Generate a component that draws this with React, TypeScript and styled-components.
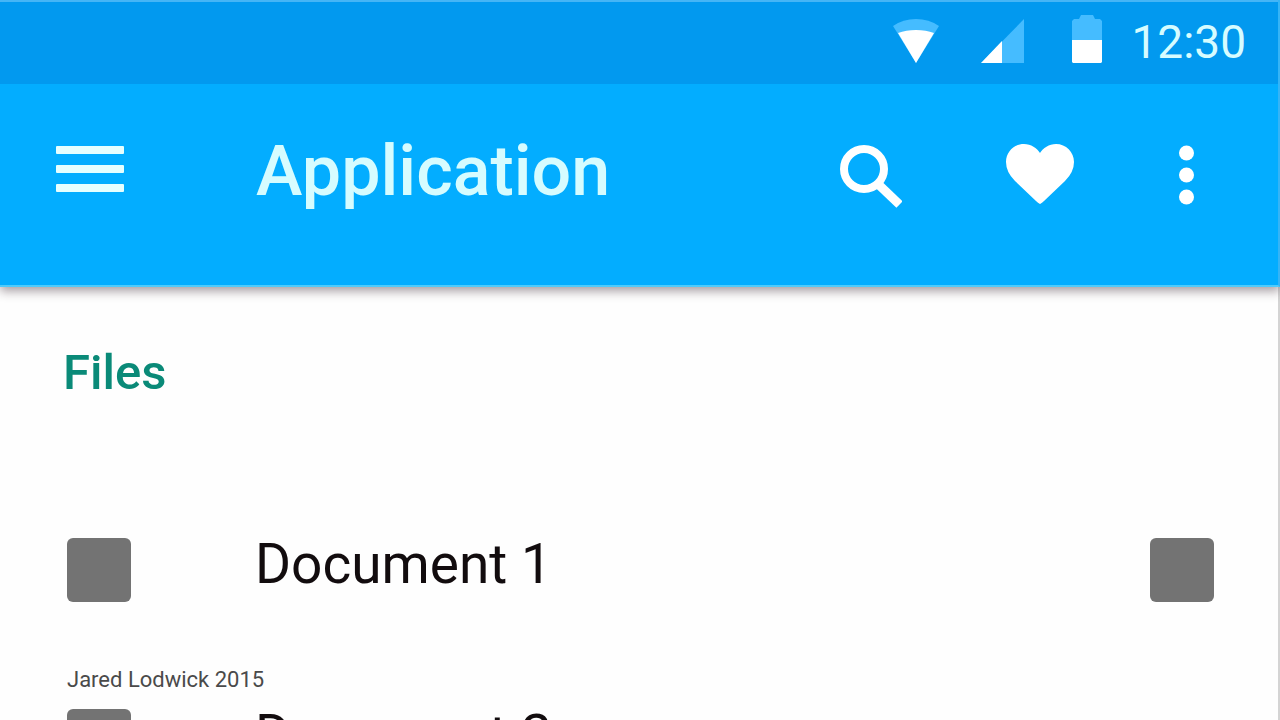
import React from "react";
import styled, { createGlobalStyle } from "styled-components";

const GlobalStyle = createGlobalStyle`
  *, *::before, *::after { box-sizing: border-box; }
  html { scrollbar-width: none; }
  body {
    margin: 0;
    background: #fefefe;
    font-family: Roboto, "Liberation Sans", sans-serif;
  }
`;

const Screen = styled.div`
  min-height: 100vh;
  display: flex;
  flex-direction: column;
  border-right: 2px solid #d4d4d4;
`;

const Header = styled.header`
  margin-right: -2px;
  border-right: 2px solid #35b4f6;
  border-bottom: 2px solid #4fcbfb;
  background: #03adff;
  box-shadow: 0 4px 10px rgba(40, 20, 30, 0.42);
`;

const StatusBar = styled.div`
  display: flex;
  align-items: flex-start;
  justify-content: flex-end;
  height: 84px;
  padding: 13px 32px 0 0;
  border-top: 2px solid #45b5f6;
  background: #0299ef;
`;

const StatusIcons = styled.div`
  display: flex;
  gap: 42px;
  margin-right: 28px;
`;

const Clock = styled.time`
  min-width: 116px;
  color: #d6fcff;
  font-size: 46px;
  line-height: 54px;
  text-align: right;
`;

const AppBar = styled.div`
  display: flex;
  align-items: flex-start;
  min-height: 201px;
  padding: 60px 83px 0 56px;
`;

const IconButton = styled.button`
  display: block;
  padding: 0;
  border: 0;
  background: none;
  color: #fff;
  cursor: pointer;

  svg { display: block; }
`;

const Title = styled.h1`
  flex: 1;
  margin: 0 0 0 132px;
  color: #d6fcff;
  font-size: 70px;
  font-weight: 500;
  line-height: 54px;
`;

const Actions = styled.div`
  display: flex;
  align-items: flex-start;
  gap: 104px;
`;

const Content = styled.main`
  padding: 60px 64px 0 67px;
`;

const SectionTitle = styled.h2`
  margin: 0 0 0 -4px;
  color: #0a8a78;
  font-size: 49px;
  font-weight: 500;
  line-height: 52px;
`;

const FileList = styled.ul`
  margin: 139px 0 0;
  padding: 0;
  list-style: none;
`;

const FileRow = styled.li`
  display: flex;
  align-items: flex-start;
`;

const Thumbnail = styled.span`
  flex: none;
  width: 64px;
  height: 64px;
  border-radius: 6px;
  background: #737373;
`;

const FileName = styled.span`
  flex: 1;
  margin-left: 124px;
  color: #120c0e;
  font-size: 55px;
  line-height: 52px;
`;

const FileAction = styled.button`
  flex: none;
  width: 64px;
  height: 64px;
  padding: 0;
  border: 0;
  border-radius: 6px;
  background: #737373;
  cursor: pointer;
`;

const Credit = styled.li`
  padding: 64px 0 16px;
  color: #4a4a4a;
  font-size: 22px;
  line-height: 27px;
`;

const WifiIcon = () => (
  <svg width="46" height="48" viewBox="0 0 46 48" aria-hidden="true">
    <path d="M0 11Q10 4 23 4T46 11L23 48Z" fill="#45bcff" />
    <path d="M5 18Q13 15 23 15T41 18L23 48Z" fill="#fff" />
  </svg>
);

const SignalIcon = () => (
  <svg width="43" height="48" viewBox="0 0 43 48" aria-hidden="true">
    <path d="M43 4V48H0Z" fill="#45bcff" />
    <path d="M21 26V48H0Z" fill="#fff" />
  </svg>
);

const BatteryIcon = () => (
  <svg width="36" height="48" viewBox="-6 0 36 48" aria-hidden="true">
    <path d="M7 4L9 0H21L23 4H28L30 6V26H0V6L2 4Z" fill="#45bcff" />
    <path d="M0 25H30V47L29 48H1L0 47Z" fill="#fff" />
  </svg>
);

const MenuIcon = () => (
  <svg width="68" height="50" viewBox="0 0 68 50" fill="#e6ffff" aria-hidden="true">
    <rect y="2" width="68" height="8" rx="1" />
    <rect y="21" width="68" height="8" rx="1" />
    <rect y="40" width="68" height="8" rx="1" />
  </svg>
);

const SearchIcon = () => (
  <svg width="62" height="64" viewBox="0 0 62 64" fill="none" stroke="currentColor" strokeWidth="8" aria-hidden="true">
    <circle cx="24" cy="25" r="20" />
    <path d="M38 40L59.500 60.500" strokeWidth="9" />
  </svg>
);

const HeartIcon = () => (
  <svg width="68" height="60" viewBox="0 0 68 60" fill="currentColor" aria-hidden="true">
    <path d="M34 60Q32 59 30 57L9 37Q0 28 0 18C0 8 8 0 18 0C25 0 31 4 34 9C37 4 43 0 50 0C60 0 68 8 68 18Q68 28 59 37L38 57Q36 59 34 60Z" />
  </svg>
);

const MoreIcon = () => (
  <svg width="17" height="62" viewBox="0 0 17 62" fill="currentColor" aria-hidden="true">
    <circle cx="8.500" cy="9" r="7.500" />
    <circle cx="8.500" cy="31" r="7.500" />
    <circle cx="8.500" cy="53" r="7.500" />
  </svg>
);

const File = ({ name, hasAction = false }: { name: string; hasAction?: boolean }) => (
  <FileRow>
    <Thumbnail />
    <FileName>{name}</FileName>
    {hasAction && <FileAction type="button" aria-label={`Options for ${name}`} />}
  </FileRow>
);

export default function App() {
  return (
    <>
      <GlobalStyle />
      <Screen>
        <Header>
          <StatusBar>
            <StatusIcons>
              <WifiIcon />
              <SignalIcon />
              <BatteryIcon />
            </StatusIcons>
            <Clock>12:30</Clock>
          </StatusBar>
          <AppBar>
            <IconButton type="button" aria-label="Menu"><MenuIcon /></IconButton>
            <Title>Application</Title>
            <Actions>
              <IconButton type="button" aria-label="Search"><SearchIcon /></IconButton>
              <IconButton type="button" aria-label="Favourite"><HeartIcon /></IconButton>
              <IconButton type="button" aria-label="More"><MoreIcon /></IconButton>
            </Actions>
          </AppBar>
        </Header>
        <Content>
          <SectionTitle>Files</SectionTitle>
          <FileList>
            <File name="Document 1" hasAction />
            <Credit>Jared Lodwick 2015</Credit>
            <File name="Document 2" />
          </FileList>
        </Content>
      </Screen>
    </>
  );
}
